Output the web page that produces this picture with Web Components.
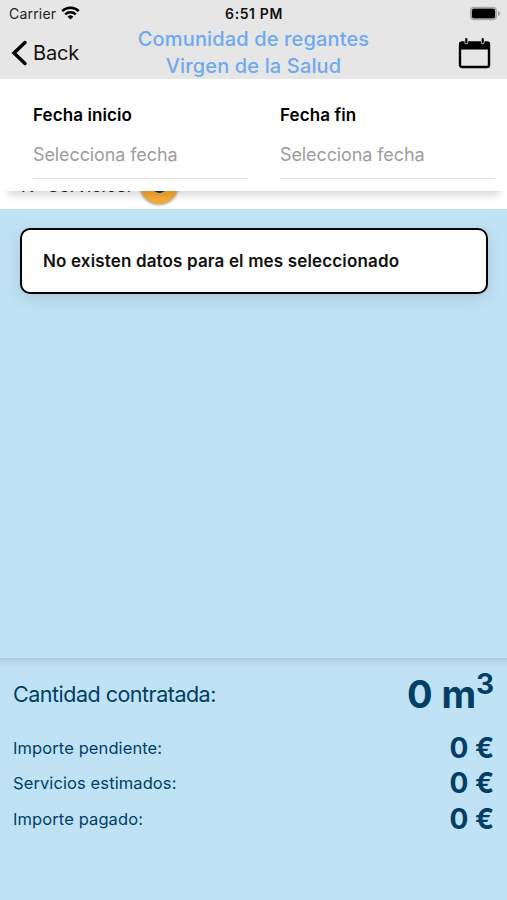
<!DOCTYPE html>
<html lang="es">
<head>
<meta charset="utf-8">
<meta name="viewport" content="width=device-width, initial-scale=1">
<title>Comunidad de regantes</title>
<style>
    body {
        margin: 0;
        font-family: Inter, "Liberation Sans", sans-serif;
        color: #000;
    }
</style>
</head>
<body>
<app-screen>
    <status-bar slot="header" carrier="Carrier" time="6:51 PM"></status-bar>
    <nav-header slot="header" back="Back">Comunidad de regantes<br>Virgen de la Salud</nav-header>
    <date-filter slot="header">
        <date-field label="Fecha inicio">Selecciona fecha</date-field>
        <date-field label="Fecha fin">Selecciona fecha</date-field>
    </date-filter>
    <service-count slot="header" count="0">Nº Servicios:</service-count>
    <empty-card>No existen datos para el mes seleccionado</empty-card>
    <totals-panel slot="footer">
        <total-row size="large" label="Cantidad contratada:">0 m<sup>3</sup></total-row>
        <total-row label="Importe pendiente:">0 €</total-row>
        <total-row label="Servicios estimados:">0 €</total-row>
        <total-row label="Importe pagado:">0 €</total-row>
    </totals-panel>
</app-screen>

<script>
class BaseElement extends HTMLElement {

    constructor() {
        super();
        this.attachShadow({ mode: 'open' });
    }
    connectedCallback() {
        this.shadowRoot.innerHTML = this.getTemplate() + this.getStyles();
    }
}

class AppScreen extends BaseElement {
    getTemplate() {
        return `
            <header><slot name="header"></slot></header>
            <main><slot></slot></main>
            <slot name="footer"></slot>
        `;
    }
    getStyles() {
        return `
            <style>
                :host {
                    display: flex;
                    flex-direction: column;
                    height: 900px;
                    overflow: hidden;
                    background: #c0e2f5;
                }
                main {
                    flex: 1;
                    padding: 19px 19px 0 20px;
                }
            </style>
        `;
    }
}

class StatusBar extends BaseElement {
    getTemplate() {
        return `
            <div class="carrier">
                <span>${this.getAttribute('carrier')}</span>
                <svg width="19" height="14" viewBox="0 0 19 14" fill="none" stroke="#000" stroke-width="2.4">
                    <path d="M1.2 5.1a11.9 11.9 0 0 1 16.6 0"/>
                    <path d="M4.2 8.3a7.7 7.7 0 0 1 10.6 0"/>
                    <path d="M9.5 13.6 6.6 10.7a4.1 4.1 0 0 1 5.8 0z" fill="#000" stroke="none"/>
                </svg>
            </div>
            <b>${this.getAttribute('time')}</b>
            <svg class="battery" width="32" height="15" viewBox="0 0 32 15">
                <rect x="1" y=".7" width="27" height="13.6" rx="4" fill="#a9a9a9"/>
                <path d="M29 4.8q2.4 1 2.4 2.7t-2.4 2.7z" fill="#a9a9a9"/>
                <rect x="3" y="2.7" width="23" height="9.6" rx="2" fill="#000"/>
            </svg>
        `;
    }
    getStyles() {
        return `
            <style>
                :host {
                    display: grid;
                    grid-template-columns: 1fr auto 1fr;
                    align-items: center;
                    height: 26px;
                    padding: 0 6px 0 9px;
                    box-sizing: border-box;
                    background: #e6e6e6;
                    font-size: 14px;
                    letter-spacing: .2px;
                    color: #222;
                }
                .carrier {
                    display: flex;
                    align-items: center;
                    gap: 5px;
                }
                b {
                    font-weight: 600;
                    letter-spacing: .6px;
                    margin-right: 2px;
                    color: #111;
                }
                .battery {
                    justify-self: end;
                }
            </style>
        `;
    }
}

class NavHeader extends BaseElement {
    getTemplate() {
        return `
            <a>
                <svg width="17" height="26" viewBox="0 0 17 26" fill="none" stroke="#000" stroke-width="3.4" stroke-linecap="round">
                    <path d="M14 2.5 3 13l11 10.5"/>
                </svg>
                ${this.getAttribute('back')}
            </a>
            <h1><slot></slot></h1>
            <svg class="calendar" width="33" height="31" viewBox="0 0 33 31">
                <rect x="2" y="4.5" width="29" height="24.5" rx="2" fill="none" stroke="#000" stroke-width="2.4"/>
                <path d="M1.5 4h30v7.5h-30z"/>
                <path d="M8.3 1.5v3M24.7 1.5v3" stroke="#e6e6e6" stroke-width="3.6" stroke-linecap="round"/>
                <path d="M8.3 1.2v3.2M24.7 1.2v3.2" stroke="#000" stroke-width="2.2" stroke-linecap="round"/>
            </svg>
        `;
    }
    getStyles() {
        return `
            <style>
                :host {
                    display: grid;
                    grid-template-columns: 1fr auto 1fr;
                    align-items: center;
                    height: 53px;
                    padding: 0 16px 0 11px;
                    background: #e6e6e6;
                }
                a {
                    display: flex;
                    align-items: center;
                    gap: 5px;
                    margin-top: -1px;
                    font-size: 20px;
                    letter-spacing: -.2px;
                    color: #111;
                }
                h1 {
                    margin: 0 -5px 0 0;
                    font-size: 20px;
                    line-height: 27px;
                    font-weight: 500;
                    letter-spacing: .14px;
                    text-align: center;
                    color: #6eaaf0;
                }
                .calendar {
                    justify-self: end;
                }
            </style>
        `;
    }
}

class DateFilter extends BaseElement {
    getTemplate() {
        return `<slot></slot>`;
    }
    getStyles() {
        return `
            <style>
                :host {
                    display: grid;
                    grid-template-columns: 1fr 1fr;
                    column-gap: 32px;
                    position: relative;
                    z-index: 1;
                    height: 112px;
                    box-sizing: border-box;
                    padding: 24px 12px 12px 33px;
                    background: #fff;
                    box-shadow: 0 12px 8px -8px rgba(0, 0, 0, .16);
                }
            </style>
        `;
    }
}

class DateField extends BaseElement {
    getTemplate() {
        return `
            <label>${this.getAttribute('label')}</label>
            <div><slot></slot></div>
        `;
    }
    getStyles() {
        return `
            <style>
                :host {
                    display: flex;
                    flex-direction: column;
                    justify-content: space-between;
                    border-bottom: 1px solid #e2e2e2;
                }
                label {
                    font-size: 17px;
                    line-height: 24px;
                    font-weight: 600;
                    letter-spacing: .1px;
                }
                div {
                    padding-bottom: 11px;
                    font-size: 18px;
                    line-height: 24px;
                    letter-spacing: -.1px;
                    color: #9d9d9d;
                }
            </style>
        `;
    }
}

class ServiceCount extends BaseElement {
    getTemplate() {
        return `
            <slot></slot>
            <span>${this.getAttribute('count')}</span>
        `;
    }
    getStyles() {
        return `
            <style>
                :host {
                    display: flex;
                    align-items: center;
                    gap: 9px;
                    height: 44px;
                    box-sizing: border-box;
                    margin-top: -26px;
                    padding: 0 0 4px 21px;
                    background: #fff;
                    font-size: 18px;
                    color: #222;
                }
                span {
                    width: 38px;
                    line-height: 38px;
                    border-radius: 50%;
                    background: #f9ab35;
                    box-shadow: 0 1px 3px rgba(0, 0, 0, .4);
                    font-size: 24px;
                    font-weight: 700;
                    text-align: center;
                    color: #023e66;
                }
            </style>
        `;
    }
}

class EmptyCard extends BaseElement {
    getTemplate() {
        return `<slot></slot>`;
    }
    getStyles() {
        return `
            <style>
                :host {
                    display: flex;
                    align-items: center;
                    height: 66px;
                    box-sizing: border-box;
                    padding: 0 21px;
                    border: 2px solid #000;
                    border-radius: 10px;
                    background: #fff;
                    box-shadow: 0 4px 16px rgba(0, 0, 0, .12);
                    font-size: 17px;
                    font-weight: 600;
                    letter-spacing: .15px;
                    color: #111;
                }
            </style>
        `;
    }
}

class TotalsPanel extends BaseElement {
    getTemplate() {
        return `<slot></slot>`;
    }
    getStyles() {
        return `
            <style>
                :host {
                    display: block;
                    height: 242px;
                    box-sizing: border-box;
                    padding: 8px 13px 0;
                    background: linear-gradient(#a9c8d9, #b4d5e7 3px, #c0e2f5 9px);
                    color: #023e66;
                }
            </style>
        `;
    }
}

class TotalRow extends BaseElement {
    getTemplate() {
        return `
            <span>${this.getAttribute('label')}</span>
            <b><slot></slot></b>
        `;
    }
    getStyles() {
        return `
            <style>
                :host {
                    display: flex;
                    justify-content: space-between;
                    align-items: center;
                    height: 35.5px;
                    font-size: 16.5px;
                    letter-spacing: .1px;
                }
                b {
                    font-size: 28px;
                    font-weight: 700;
                    letter-spacing: -.1px;
                }
                :host([size="large"]) {
                    height: 56px;
                    margin-bottom: 8px;
                    font-size: 21.5px;
                    letter-spacing: -.5px;
                }
                :host([size="large"]) b {
                    font-size: 38px;
                }
                ::slotted(sup) {
                    font-size: 28px;
                    line-height: 0;
                    vertical-align: 14px;
                }
            </style>
        `;
    }
}

customElements.define('app-screen', AppScreen);
customElements.define('status-bar', StatusBar);
customElements.define('nav-header', NavHeader);
customElements.define('date-filter', DateFilter);
customElements.define('date-field', DateField);
customElements.define('service-count', ServiceCount);
customElements.define('empty-card', EmptyCard);
customElements.define('totals-panel', TotalsPanel);
customElements.define('total-row', TotalRow);
</script>
</body>
</html>
